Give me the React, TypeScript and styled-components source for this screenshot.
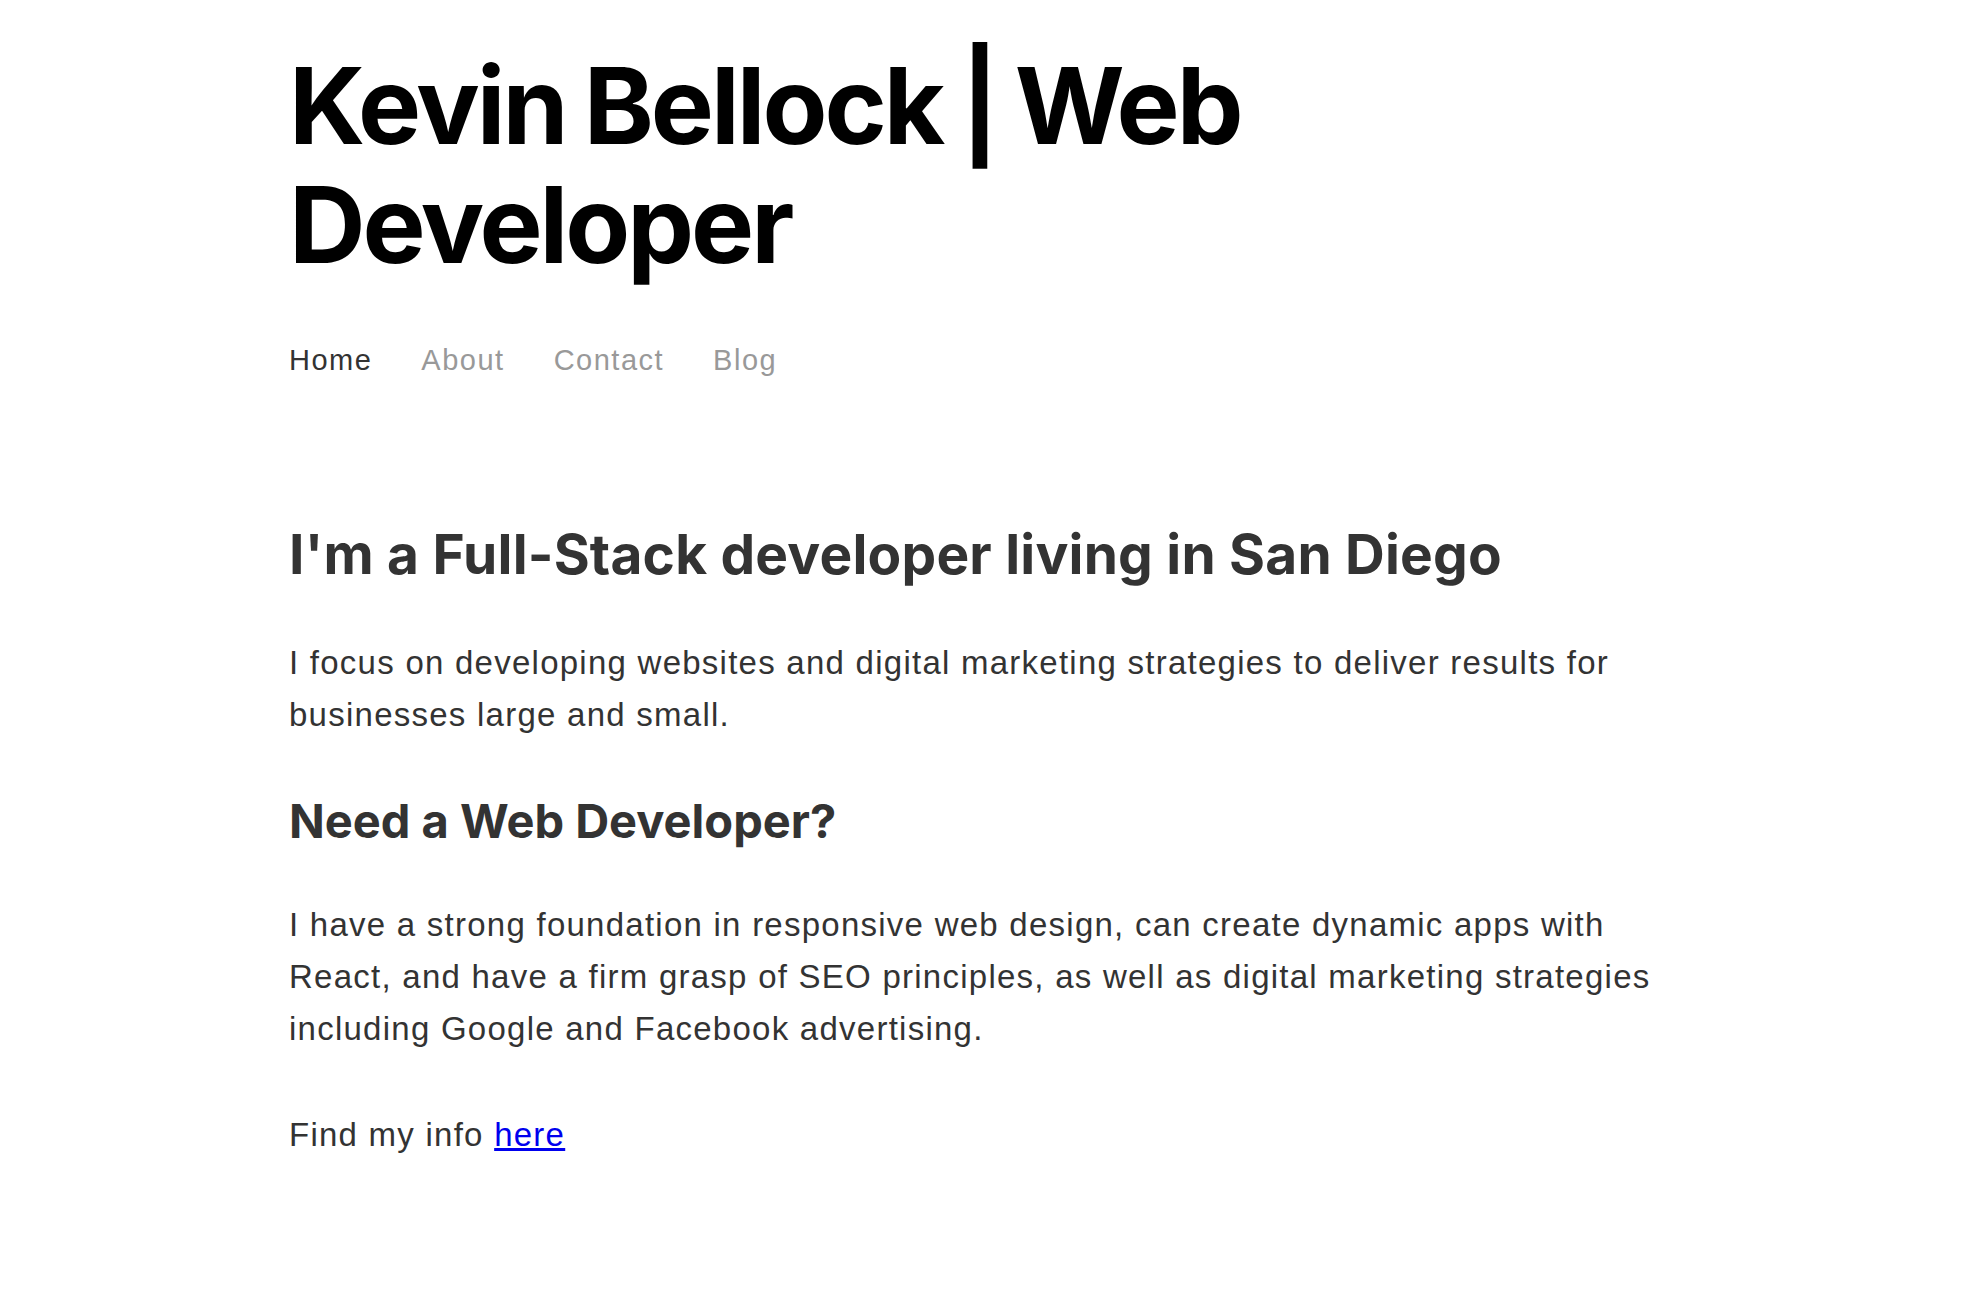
import React from "react";
import styled, { createGlobalStyle } from "styled-components";

const Global = createGlobalStyle`
  html, body { margin: 0; padding: 0; background: #ffffff; }
  body { font-family: "Liberation Sans", Arial, sans-serif; color: #333333; }
  * { box-sizing: border-box; }
`;

const Page = styled.div`
  width: 1400px;
  margin: 0 auto;
  padding-top: 46px;
  padding-bottom: 120px;
`;

const Header = styled.header`
  display: flex;
  flex-direction: column;
`;

const SiteTitle = styled.h1`
  margin: 0;
  font-family: Inter, "Liberation Sans", sans-serif;
  font-weight: 700;
  font-size: 106px;
  line-height: 119px;
  color: #000000;
  letter-spacing: -3px;
  word-spacing: -4px;
  max-width: 1000px;
`;

const Nav = styled.nav`
  display: flex;
  gap: 49px;
  margin-top: 60px;
`;

const NavLink = styled.a<{ $active?: boolean }>`
  font-family: "Liberation Sans", Arial, sans-serif;
  font-size: 29px;
  letter-spacing: 1.5px;
  color: ${(p) => (p.$active ? "#333333" : "#999999")};
  text-decoration: none;
  cursor: pointer;
`;

const Main = styled.main`
  display: flex;
  flex-direction: column;
  margin-top: 144px;
`;

const Heading = styled.h2<{ $size: number; $spacing: number }>`
  margin: 0;
  font-family: Inter, "Liberation Sans", sans-serif;
  font-weight: 700;
  font-size: ${(p) => p.$size}px;
  line-height: 1.2;
  color: #333333;
  letter-spacing: ${(p) => p.$spacing}px;
`;

const Paragraph = styled.p<{ $top: number }>`
  margin: ${(p) => p.$top}px 0 0;
  font-size: 33px;
  line-height: 52px;
  letter-spacing: 1.25px;
  color: #333333;
`;

const SubHeading = styled(Heading)<{ $top: number }>`
  margin-top: ${(p) => p.$top}px;
`;

const InfoLink = styled.a`
  color: #0000ee;
  text-decoration: underline;
`;

export default function App() {
  return (
    <>
      <Global />
      <Page>
        <Header>
          <SiteTitle>Kevin Bellock | Web Developer</SiteTitle>
          <Nav>
            <NavLink $active>Home</NavLink>
            <NavLink>About</NavLink>
            <NavLink>Contact</NavLink>
            <NavLink>Blog</NavLink>
          </Nav>
        </Header>
        <Main>
          <Heading as="h2" $size={55} $spacing={0.2}>
            I'm a Full-Stack developer living in San Diego
          </Heading>
          <Paragraph $top={50}>
            I focus on developing websites and digital marketing strategies to
            deliver results for businesses large and small.
          </Paragraph>
          <SubHeading as="h3" $size={47} $spacing={0} $top={52}>
            Need a Web Developer?
          </SubHeading>
          <Paragraph $top={50}>
            I have a strong foundation in responsive web design, can create
            dynamic apps with React, and have a firm grasp of SEO principles, as
            well as digital marketing strategies including Google and Facebook
            advertising.
          </Paragraph>
          <Paragraph $top={54}>
            Find my info <InfoLink href="#">here</InfoLink>
          </Paragraph>
        </Main>
      </Page>
    </>
  );
}
